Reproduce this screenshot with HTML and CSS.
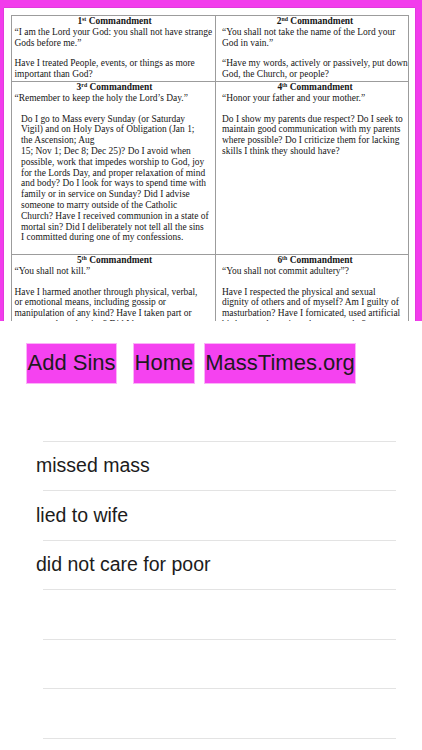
FILE: index.html
```html
<!DOCTYPE html>
<html lang="en">
<head>
<meta charset="utf-8">
<title>Examination of Conscience</title>
<link rel="stylesheet" href="styles.css">
</head>
<body>
<div class="frame">
  <div class="page">
    <table class="doc">
      <tr class="row-1">
        <td class="cell cell-left">
          <div class="head">1<sup>st</sup> Commandment</div>
          <div class="line">“I am the Lord your God: you shall not have strange</div>
          <div class="line">Gods before me.”</div>
          <div class="gap"></div>
          <div class="line">Have I treated People, events, or things as more</div>
          <div class="line">important than God?</div>
        </td>
        <td class="cell cell-right">
          <div class="head">2<sup>nd</sup> Commandment</div>
          <div class="line">“You shall not take the name of the Lord your</div>
          <div class="line">God in vain.”</div>
          <div class="gap"></div>
          <div class="line">“Have my words, actively or passively, put down</div>
          <div class="line">God, the Church, or people?</div>
        </td>
      </tr>
      <tr class="row-2">
        <td class="cell cell-left">
          <div class="head">3<sup>rd</sup> Commandment</div>
          <div class="line">“Remember to keep the holy the Lord’s Day.”</div>
          <div class="gap"></div>
          <div class="para indent">
            <div class="line">Do I go to Mass every Sunday (or Saturday</div>
            <div class="line">Vigil) and on Holy Days of Obligation (Jan 1;</div>
            <div class="line">the Ascension; Aug</div>
            <div class="line">15; Nov 1; Dec 8; Dec 25)? Do I avoid when</div>
            <div class="line">possible, work that impedes worship to God, joy</div>
            <div class="line">for the Lords Day, and proper relaxation of mind</div>
            <div class="line">and body? Do I look for ways to spend time with</div>
            <div class="line">family or in service on Sunday? Did I advise</div>
            <div class="line">someone to marry outside of the Catholic</div>
            <div class="line">Church? Have I received communion in a state of</div>
            <div class="line">mortal sin? Did I deliberately not tell all the sins</div>
            <div class="line">I committed during one of my confessions.</div>
          </div>
        </td>
        <td class="cell cell-right">
          <div class="head">4<sup>th</sup> Commandment</div>
          <div class="line">“Honor your father and your mother.”</div>
          <div class="gap"></div>
          <div class="para">
            <div class="line">Do I show my parents due respect? Do I seek to</div>
            <div class="line">maintain good communication with my parents</div>
            <div class="line">where possible? Do I criticize them for lacking</div>
            <div class="line">skills I think they should have?</div>
          </div>
        </td>
      </tr>
      <tr class="row-3">
        <td class="cell cell-left">
          <div class="head">5<sup>th</sup> Commandment</div>
          <div class="line">“You shall not kill.”</div>
          <div class="gap"></div>
          <div class="para">
            <div class="line">Have I harmed another through physical, verbal,</div>
            <div class="line">or emotional means, including gossip or</div>
            <div class="line">manipulation of any kind? Have I taken part or</div>
            <div class="line">encouraged an abortion? Did I hate anyone or</div>
          </div>
        </td>
        <td class="cell cell-right">
          <div class="head">6<sup>th</sup> Commandment</div>
          <div class="line">“You shall not commit adultery”?</div>
          <div class="gap"></div>
          <div class="para">
            <div class="line">Have I respected the physical and sexual</div>
            <div class="line">dignity of others and of myself? Am I guilty of</div>
            <div class="line">masturbation? Have I fornicated, used artificial</div>
            <div class="line">birth control, or viewed pornography?</div>
          </div>
        </td>
      </tr>
    </table>
  </div>
</div>

<div class="actions">
  <button class="btn">Add Sins</button>
  <button class="btn btn-home">Home</button>
  <button class="btn btn-mass">MassTimes.org</button>
</div>

<div class="list">
  <div class="item"><span class="label"></span></div>
  <div class="item"><span class="label">missed mass</span></div>
  <div class="item"><span class="label">lied to wife</span></div>
  <div class="item"><span class="label">did not care for poor</span></div>
  <div class="item"><span class="label"></span></div>
  <div class="item"><span class="label"></span></div>
  <div class="item"><span class="label"></span></div>
</div>
</body>
</html>
```

FILE: styles.css
```css
html, body {
  margin: 0;
  padding: 0;
  background: #ffffff;
}

body {
  width: 422px;
  height: 750px;
  overflow: hidden;
  font-family: "Liberation Sans", Arial, sans-serif;
}

/* ---------- document image frame ---------- */
.frame {
  box-sizing: border-box;
  height: 321px;
  padding: 7.5px 7px 0 4px;
  background: #f23cec;
  overflow: hidden;
}

.page {
  box-sizing: border-box;
  height: 100%;
  padding: 7.5px 6px 0 7px;
  background: #ffffff;
  box-shadow: 0 0 1px rgba(0, 0, 0, 0.35);
  overflow: hidden;
}

.doc {
  width: 398px;
  border-collapse: collapse;
  table-layout: fixed;
  font-family: "Liberation Serif", "Times New Roman", serif;
  font-size: 9.45px;
  color: #161616;
}

.cell {
  border: 1px solid #9c9c9c;
  vertical-align: top;
  padding: 0;
  overflow: hidden;
}

.cell-left {
  width: 200px;
  padding-left: 2.5px;
}

.cell-right {
  padding-left: 6.5px;
}

.row-1 .cell { height: 65px; }
.row-2 .cell { height: 172px; }
.row-3 .cell { height: 80px; }

.head {
  text-align: center;
  font-weight: bold;
  line-height: 11px;
  white-space: nowrap;
}

.head sup {
  font-size: 0.62em;
  line-height: 0;
  vertical-align: 0.45em;
}

.line {
  line-height: 10.6px;
  white-space: nowrap;
}

.gap {
  height: 10px;
}

.para .line {
  line-height: 10.8px;
}

.indent {
  padding-left: 6.5px;
}

/* ---------- buttons ---------- */
.actions {
  display: flex;
  align-items: center;
  padding: 21.5px 0 0 26px;
}

.btn {
  box-sizing: border-box;
  height: 41px;
  margin: 0;
  padding: 0 0.5px;
  border: 1px solid #fbb2f8;
  background: #f542f0;
  color: #1e1a1e;
  font-family: "Liberation Sans", Arial, sans-serif;
  font-size: 22px;
  line-height: 1;
  display: flex;
  align-items: center;
}

.btn-home {
  margin-left: 16px;
}

.btn-mass {
  margin-left: 9px;
}

/* ---------- list ---------- */
.list {
  margin-top: 8.5px;
}

.item {
  display: flex;
  flex-direction: column;
  height: 49.5px;
}

.item::after {
  content: "";
  display: block;
  height: 1px;
  margin: 0 26px 0 43px;
  background: #e3e3e3;
}

.label {
  flex: 1;
  display: flex;
  align-items: center;
  padding-left: 36px;
  font-size: 19.5px;
  color: #1c1c1c;
}
```
